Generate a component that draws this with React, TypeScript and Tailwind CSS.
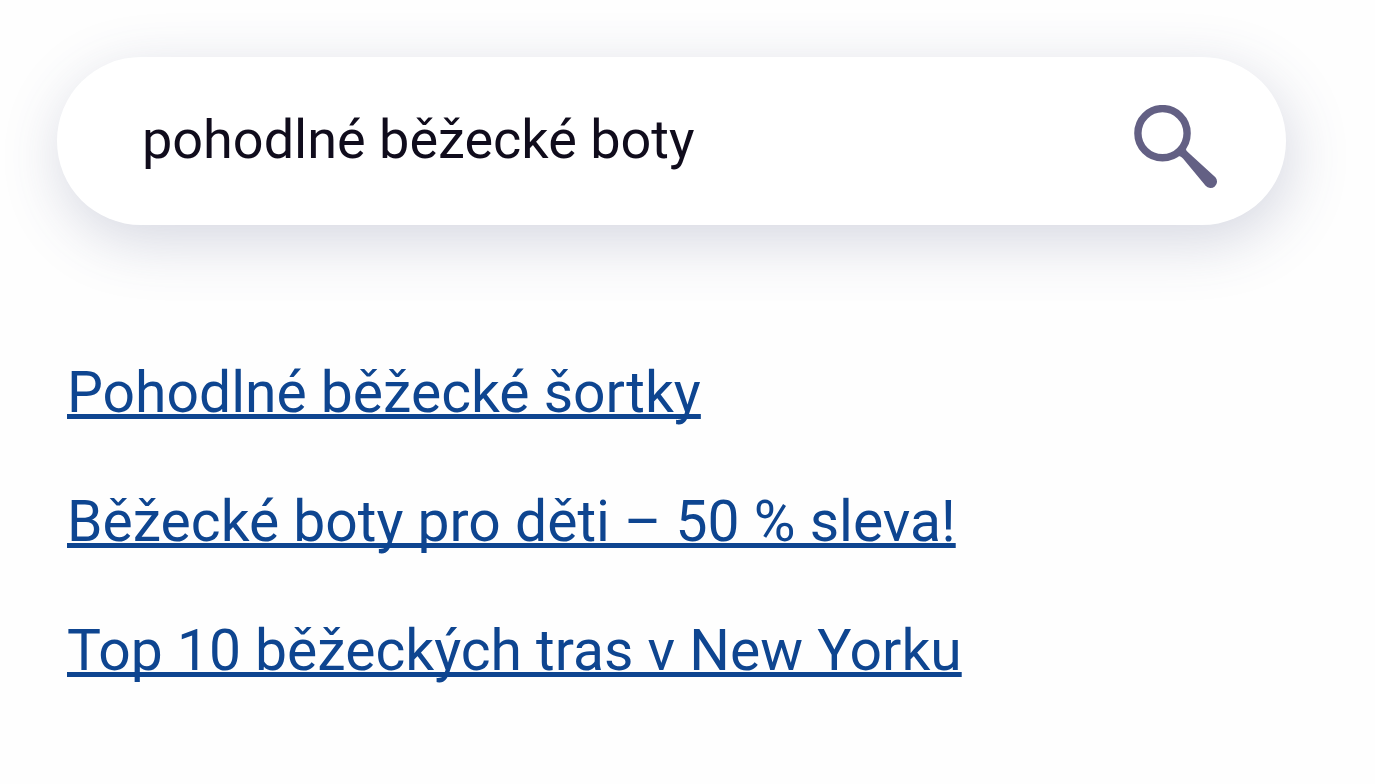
import { useState } from "react";

const results = [
  { title: "Pohodlné běžecké šortky", href: "#sortky" },
  { title: "Běžecké boty pro děti – 50 % sleva!", href: "#boty-deti" },
  { title: "Top 10 běžeckých tras v New Yorku", href: "#trasy" },
];

function SearchIcon() {
  return (
    <svg viewBox="0 0 84 84" className="size-[84px]" aria-hidden="true">
      <circle
        cx="28.5"
        cy="28.2"
        r="24.6"
        fill="none"
        stroke="currentColor"
        strokeWidth="7.4"
      />
      {/* Handle, tapered towards the lens */}
      <path
        d="M44 51 Q46.8 50.5 49 53.5 L71.6 80.8 A6.5 6.5 0 1 0 81.4 72.2 L54.3 47.6 Q51.6 45.6 52 43.5 Z"
        fill="currentColor"
      />
    </svg>
  );
}

export default function App() {
  const [query, setQuery] = useState("pohodlné běžecké boty");

  return (
    <main className="min-h-screen bg-[#fefefe] pt-[57px] pr-[89px] pl-[57px] font-['Roboto',sans-serif]">
      <form
        role="search"
        onSubmit={(e) => e.preventDefault()}
        className="flex h-[168px] items-center rounded-full bg-white pr-[68px] pl-[85px] shadow-[4px_16px_60px_rgba(70,78,125,0.22)]"
      >
        <input
          type="text"
          aria-label="Hledat"
          value={query}
          onChange={(e) => setQuery(e.target.value)}
          className="min-w-0 flex-1 bg-transparent pb-1 text-[54px] text-[#100c1c] outline-none"
        />
        <button
          type="submit"
          aria-label="Vyhledat"
          className="cursor-pointer pt-3 text-[#636084]"
        >
          <SearchIcon />
        </button>
      </form>

      <ul className="mt-[136px] flex flex-col gap-[65px] pl-[10px]">
        {results.map((result) => (
          <li key={result.href}>
            <a
              href={result.href}
              className="block w-fit text-[57px] leading-[64px] text-[#0e4590] underline decoration-5 underline-offset-2 [text-decoration-skip-ink:none]"
            >
              {result.title}
            </a>
          </li>
        ))}
      </ul>
    </main>
  );
}
